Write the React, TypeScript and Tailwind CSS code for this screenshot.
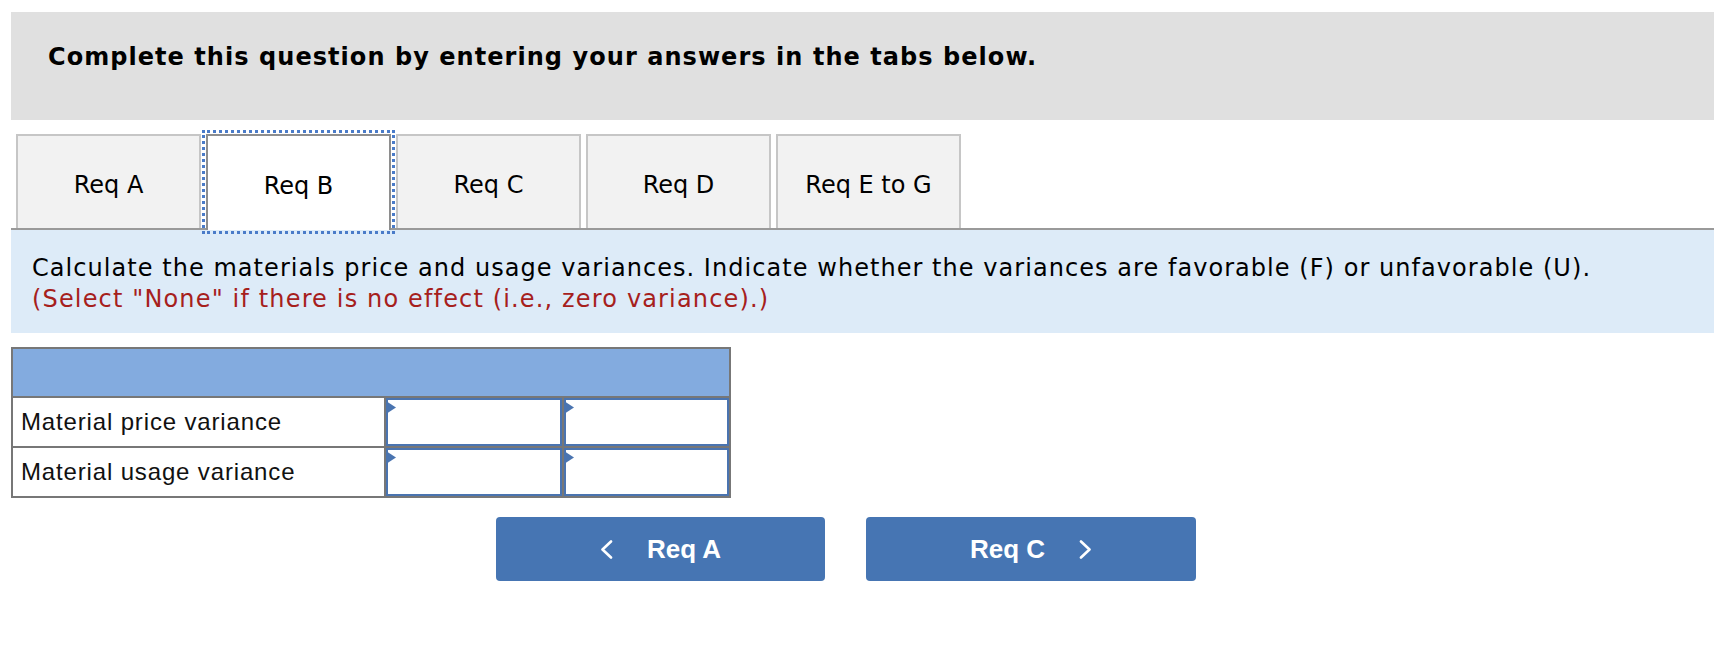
import React from "react";

const tabs = ["Req A", "Req B", "Req C", "Req D", "Req E to G"];

function Tri() {
  return (
    <svg className="absolute -left-[2px] top-[1px]" width="10" height="13" viewBox="0 0 10 13">
      <polygon points="0,0 10,6.5 0,13" fill="#4a74b0" />
    </svg>
  );
}

function InputCell() {
  return (
    <div className="relative bg-white border-2 border-[#4a74b0]">
      <Tri />
    </div>
  );
}

function Chevron({ dir }: { dir: "l" | "r" }) {
  return (
    <svg width="13" height="19" viewBox="0 0 13 19" fill="none">
      <polyline
        points={dir === "l" ? "11,1.5 2.5,9.5 11,17.5" : "2,1.5 10.5,9.5 2,17.5"}
        stroke="white"
        strokeWidth="2.6"
        strokeLinecap="round"
        strokeLinejoin="round"
      />
    </svg>
  );
}

export default function App() {
  return (
    <div className="w-[1728px] h-[672px] bg-white font-['DejaVu_Sans',sans-serif] text-black">
      <div className="ml-[11px] mr-[14px] pt-[12px]">
        {/* header */}
        <div className="h-[108px] bg-[#e0e0e0] pl-[37px] pt-[31px]">
          <div className="text-[24px] leading-[28px] font-bold tracking-[1.05px]">
            Complete this question by entering your answers in the tabs below.
          </div>
        </div>

        {/* tabs */}
        <div className="mt-[14px] flex items-start gap-[5px] pl-[5px] border-b-2 border-[#9a9a9a] h-[96px]">
          {tabs.map((t, i) =>
            i === 1 ? (
              <div
                key={t}
                className="relative z-10 w-[185px] h-[96px] bg-white border-2 border-b-0 border-[#8e8e8e] outline-[3px] outline-dotted outline-[#4a7bc8] outline-offset-[1px] flex items-center justify-center text-[24px] pt-[6px]"
              >
                {t}
              </div>
            ) : (
              <div
                key={t}
                className="w-[185px] h-[94px] bg-[#f2f2f2] border-2 border-b-0 border-[#c6c6c6] flex items-center justify-center text-[24px] pt-[6px]"
              >
                {t}
              </div>
            )
          )}
        </div>

        {/* instructions */}
        <div className="h-[103px] bg-[#ddebf8] pl-[21px] pt-[23px] text-[24px] leading-[31px] tracking-[1.05px]">
          <div>
            Calculate the materials price and usage variances. Indicate whether the variances are favorable (F) or unfavorable (U).
          </div>
          <div className="text-[#a6201c] tracking-[1.15px]">(Select "None" if there is no effect (i.e., zero variance).)</div>
        </div>

        {/* table */}
        <div className="mt-[14px] w-[720px] bg-[#777777] p-[2px] flex flex-col gap-[2px] font-['Liberation_Sans',Arial,sans-serif]">
          <div className="h-[47px] bg-[#83abdf]" />
          {["Material price variance", "Material usage variance"].map((label) => (
            <div key={label} className="grid grid-cols-[371px_176px_165px] gap-[2px] h-[48px]">
              <div className="bg-white flex items-center pl-[8px] text-[24px] tracking-[0.85px] text-[#111111]">
                {label}
              </div>
              <InputCell />
              <InputCell />
            </div>
          ))}
        </div>

        {/* buttons */}
        <div className="mt-[19px] ml-[485px] flex gap-[41px] font-['Liberation_Sans',Arial,sans-serif]">
          <button className="w-[329px] h-[64px] rounded-[4px] bg-[#4675b3] text-white font-bold text-[26px] flex items-center justify-center gap-[34px]">
            <Chevron dir="l" />
            <span>Req A</span>
          </button>
          <button className="w-[330px] h-[64px] rounded-[4px] bg-[#4675b3] text-white font-bold text-[26px] flex items-center justify-center gap-[34px]">
            <span>Req C</span>
            <Chevron dir="r" />
          </button>
        </div>
      </div>
    </div>
  );
}
